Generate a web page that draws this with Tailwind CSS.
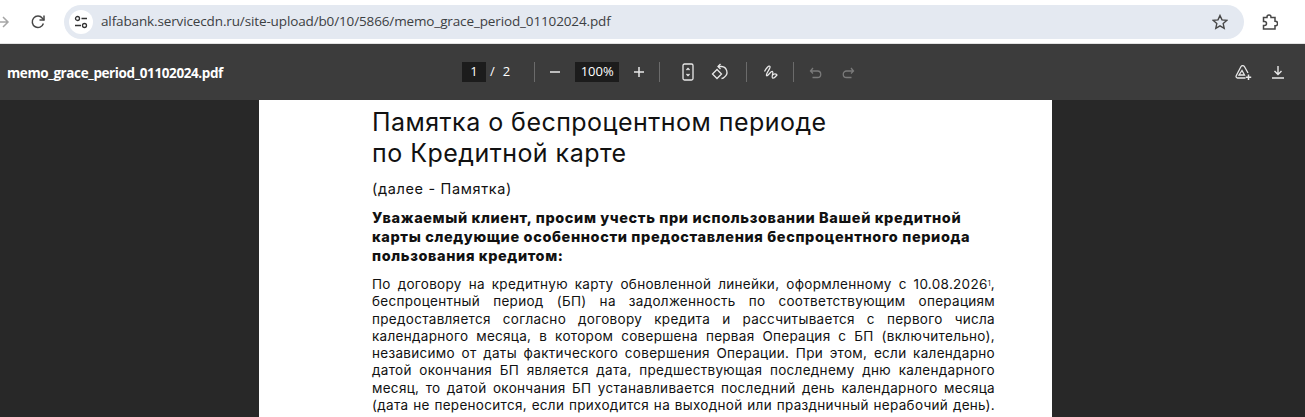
<!DOCTYPE html>
<html lang="ru">

<head>
    <meta charset="UTF-8">
    <title>memo_grace_period_01102024.pdf</title>
    <script src="https://cdn.jsdelivr.net/npm/@tailwindcss/browser@4"></script>
</head>

<body class="w-[1305px] h-[417px] overflow-hidden bg-[#282828] font-['Open_Sans',sans-serif]">
    <!-- browser toolbar -->
    <div class="h-[44px] bg-white flex items-center border-b border-[#e3e3e3]">
        <svg class="w-[12px] h-[14px] text-[#a6a6a6]" viewBox="0 0 12 14" fill="none" stroke="currentColor" stroke-width="1.5">
            <path d="M-3 7h11M3 2l5 5-5 5" />
        </svg>
        <svg class="w-[16px] h-[16px] ml-[18px] text-[#474747]" viewBox="0 0 16 16" fill="none" stroke="currentColor" stroke-width="1.5">
            <path d="M13.400 9.500A5.700 5.700 0 1 1 12.400 4.200L14 6" />
            <path d="M14 1.500V6H9.500" />
        </svg>
        <div class="ml-[18px] w-[1180px] h-[34px] rounded-full bg-[#e4e9f1] flex items-center pl-[5px] pr-[16px]">
            <div class="w-[24px] h-[24px] rounded-full bg-white flex items-center justify-center shrink-0">
                <svg class="w-[14px] h-[14px] text-[#333]" viewBox="0 0 14 14" fill="none" stroke="currentColor" stroke-width="1.300">
                    <circle cx="3.500" cy="3.500" r="2" />
                    <path d="M7.500 3.500H13M1 10.500h6" />
                    <circle cx="10.500" cy="10.500" r="2" />
                </svg>
            </div>
            <span class="ml-[8px] text-[13.500px] text-[#3c4043] tracking-[-0.13px] whitespace-nowrap">alfabank.servicecdn.ru/site-upload/b0/10/5866/memo_grace_period_01102024.pdf</span>
            <svg class="ml-auto w-[16px] h-[16px] text-[#474747]" viewBox="0 0 16 16" fill="none" stroke="currentColor" stroke-width="1.400">
                <path d="M8 1.500l2 4.400 4.700.5-3.500 3.200 1 4.700L8 11.900l-4.200 2.400 1-4.700L1.300 6.400 6 5.900z" />
            </svg>
        </div>
        <svg class="ml-[18px] w-[16px] h-[16px] text-[#474747]" viewBox="0 0 16 16" fill="none" stroke="currentColor" stroke-width="1.500">
            <path d="M1.500 3.500H5V3a2 2 0 0 1 4 0v.5h4v3.700h.3a2.300 2.300 0 0 1 0 4.600H13V15H1.500v-3.500h1a2 2 0 0 0 0-4h-1z" />
        </svg>
    </div>

    <!-- pdf toolbar -->
    <div class="h-[56px] bg-[#3c3c3c] flex items-center text-white">
        <span class="ml-[7px] w-[455px] text-[13.500px] font-bold whitespace-nowrap tracking-[-0.4px] pt-[2px]">memo_grace_period_01102024.pdf</span>
        <div class="w-[24px] h-[20px] bg-[#1c1c1c] text-[13px] flex items-center justify-center">1</div>
        <span class="ml-[4px] text-[13px]">/</span>
        <span class="ml-[8px] text-[13px]">2</span>
        <div class="ml-[24px] w-px h-[20px] bg-[#6b6b6b]"></div>
        <svg class="ml-[14px] w-[12px] h-[12px] text-[#e8e8e8]" viewBox="0 0 12 12" stroke="currentColor" stroke-width="1.500">
            <path d="M1 6h10" />
        </svg>
        <div class="ml-[14px] w-[44px] h-[20px] bg-[#1c1c1c] text-[13px] flex items-center justify-center">100%</div>
        <svg class="ml-[14px] w-[12px] h-[12px] text-[#e8e8e8]" viewBox="0 0 12 12" stroke="currentColor" stroke-width="1.500">
            <path d="M1 6h10M6 1v10" />
        </svg>
        <div class="ml-[14px] w-px h-[20px] bg-[#6b6b6b]"></div>
        <svg class="ml-[21px] w-[14px] h-[18px] text-[#e8e8e8]" viewBox="0 0 14 18" fill="none" stroke="currentColor" stroke-width="1.300">
            <rect x="2" y="1" width="10" height="16" rx="1.500" />
            <path d="M5.500 7l1.500-1.500L8.500 7M5.500 11l1.500 1.500L8.500 11" />
        </svg>
        <svg class="ml-[16px] w-[18px] h-[18px] text-[#e8e8e8]" viewBox="0 0 18 18" fill="none" stroke="currentColor" stroke-width="1.300">
            <path d="M6 6.500L1.500 11 6 15.500l4.500-4.500z" />
            <path d="M7 3.500h3.500a5.800 5.800 0 0 1 3 10.500 5 5 0 0 1-3 1.500" />
            <path d="M9.500 1L7 3.500 9.500 6" />
        </svg>
        <div class="ml-[17px] w-px h-[20px] bg-[#6b6b6b]"></div>
        <svg class="ml-[16px] w-[16px] h-[16px] text-[#e8e8e8]" viewBox="0 0 16 16" fill="none" stroke="currentColor" stroke-width="1.300">
            <path d="M1.500 7.500C3 4.500 6 1 7 2.500 8 4 2.500 10 3.500 11.500 4.500 13 8 6.500 9.500 7.500 11 8.500 8 13 9.500 14c1.500 1 3.500-2 4.500-3-1-1.500-3.500-1.500-4 0" />
        </svg>
        <div class="ml-[14px] w-px h-[20px] bg-[#6b6b6b]"></div>
        <svg class="ml-[15px] w-[13px] h-[13px] text-[#7a7a7a]" viewBox="0 0 13 13" fill="none" stroke="currentColor" stroke-width="1.300">
            <path d="M1.500 5h7a3 3 0 0 1 0 6.500H3.500M4 2L1.500 5 4 7.500" />
        </svg>
        <svg class="ml-[20px] w-[13px] h-[13px] text-[#7a7a7a]" viewBox="0 0 13 13" fill="none" stroke="currentColor" stroke-width="1.300">
            <path d="M11.500 5h-7a3 3 0 0 0 0 6.500h5M9 2l2.500 3L9 7.500" />
        </svg>
        <svg class="ml-auto w-[18px] h-[18px] text-[#e8e8e8]" viewBox="0 0 18 18" fill="none" stroke="currentColor" stroke-width="1.300">
            <path d="M11.500 15H3.500a1.500 1.500 0 0 1-1.300-2.200L7 3.500a2 2 0 0 1 3.400 0l3.600 6.500" />
            <path d="M5 12h5.500L8 7.500z" />
            <path d="M14.500 11.500v5.500M11.800 14.300h5.400" stroke-width="1.500" />
        </svg>
        <svg class="ml-[19px] mr-[20px] w-[14px] h-[16px] text-[#e8e8e8]" viewBox="0 0 14 16" fill="none" stroke="currentColor" stroke-width="1.400">
            <path d="M7 2v8M3.500 7L7 10.500 10.500 7M1 14h12" />
        </svg>
    </div>

    <!-- pdf page -->
    <div class="w-[793px] h-[317px] ml-[259px] bg-white pl-[113px] pr-[57px] text-[#111] font-['Inter',sans-serif] overflow-hidden">
        <h1 class="pt-[7px] text-[25px] leading-[31px] whitespace-nowrap tracking-[0.47px]">Памятка о беспроцентном периоде<br>по Кредитной карте</h1>
        <p class="mt-[10px] text-[14.500px] leading-[20px] tracking-[0.65px]">(далее - Памятка)</p>
        <p class="mt-[9px] text-[14.500px] leading-[19px] font-extrabold whitespace-nowrap tracking-[0.62px]">
            Уважаемый клиент, просим учесть при использовании Вашей кредитной<br>
            карты следующие особенности предоставления беспроцентного периода<br>
            пользования кредитом:
        </p>
        <div class="mt-[11px] text-[13.500px] leading-[17.300px] [text-align-last:justify] tracking-[0.3px]">
            <div class="whitespace-nowrap">По договору на кредитную карту обновленной линейки, оформленному с 10.08.2026<sup class="text-[7px]">1</sup>,</div>
            <div>беспроцентный период (БП) на задолженность по соответствующим операциям</div>
            <div>предоставляется согласно договору кредита и рассчитывается с первого числа</div>
            <div>календарного месяца, в котором совершена первая Операция с БП (включительно),</div>
            <div>независимо от даты фактического совершения Операции. При этом, если календарно</div>
            <div>датой окончания БП является дата, предшествующая последнему дню календарного</div>
            <div>месяц, то датой окончания БП устанавливается последний день календарного месяца</div>
            <div>(дата не переносится, если приходится на выходной или праздничный нерабочий день).</div>
        </div>
    </div>
</body>

</html>
